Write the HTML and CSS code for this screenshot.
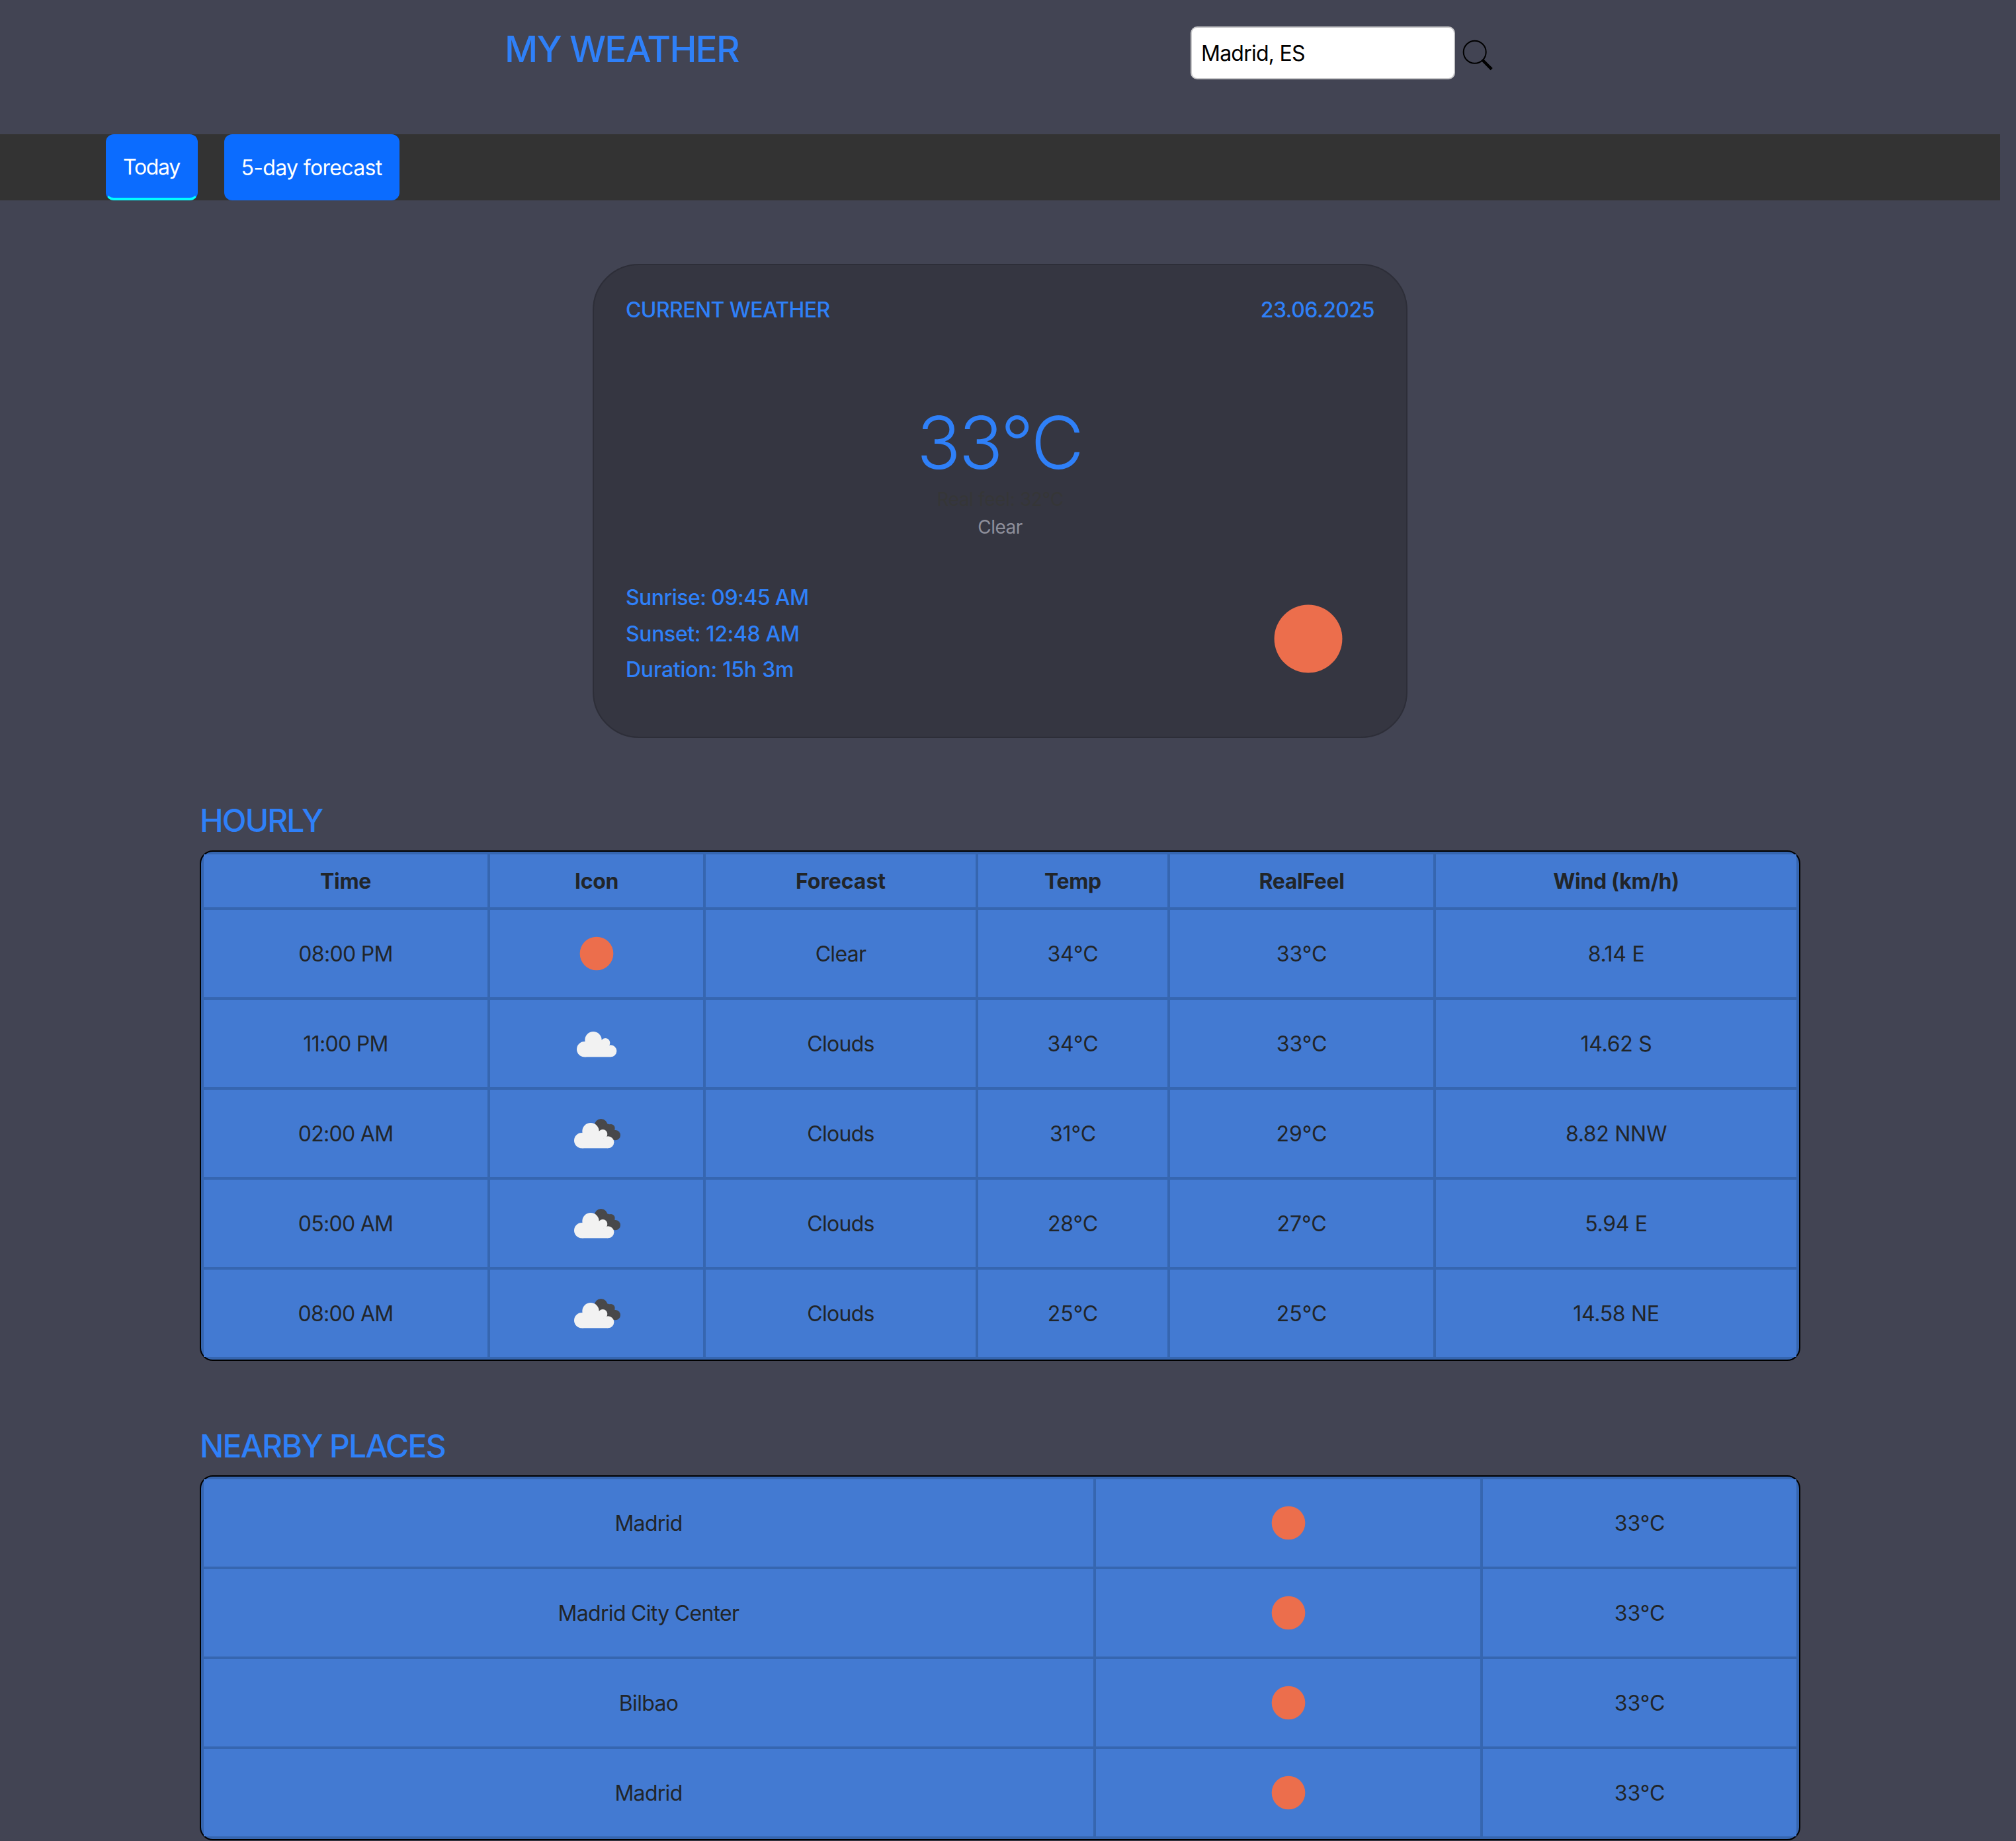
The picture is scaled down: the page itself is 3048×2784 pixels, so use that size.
FILE: index.html
```
<!DOCTYPE html>
<html lang="en">
<head>
<meta charset="utf-8">
<title>My Weather</title>
<link rel="stylesheet" href="styles.css">
</head>
<body>
<svg class="sprite" aria-hidden="true">
  <symbol id="sun" viewBox="-150 -150 300 300">
    <circle r="76" fill="#ec6e4c"/>
  </symbol>
  <symbol id="cloud-shape" viewBox="-150 -150 300 300">
    <circle cx="-55" cy="26" r="35"/>
    <circle cx="-15" cy="-16" r="38"/>
    <circle cx="40" cy="-3" r="21"/>
    <circle cx="64" cy="34" r="27"/>
    <rect x="-56" y="18" width="120" height="43"/>
    <rect x="-40" y="-16" width="84" height="60"/>
  </symbol>
  <symbol id="cloud" viewBox="-150 -150 300 300">
    <use href="#cloud-shape" x="-150" y="-150" width="300" height="300" fill="#f2f2f2"/>
  </symbol>
  <symbol id="clouds" viewBox="-150 -150 300 300">
    <g fill="#48484a">
      <circle cx="20" cy="-36" r="30"/>
      <circle cx="65" cy="-24" r="18"/>
      <circle cx="85" cy="8" r="23"/>
      <path d="M0-30 30-50 66-38 84-14 90 0 80 30 20 30Z"/>
    </g>
    <use href="#cloud-shape" x="-162" y="-144" width="300" height="300" fill="#f2f2f2"/>
  </symbol>
</svg>

<div class="page">
  <header class="header">
    <h1 class="logo">MY WEATHER</h1>
    <form class="search">
      <input class="search-input" type="text" value="Madrid, ES" aria-label="City">
      <svg class="search-icon" viewBox="0 0 52 52">
        <circle cx="21.7" cy="22.7" r="17" fill="none" stroke="#000" stroke-width="2"/>
        <path d="M33.6 35 47.2 48.6" stroke="#000" stroke-width="4.4"/>
      </svg>
    </form>
  </header>

  <nav class="tabs">
    <button class="tab tab-active">Today</button>
    <button class="tab tab-wide">5-day forecast</button>
  </nav>

  <section class="current">
    <div class="current-head">
      <span class="current-title">CURRENT WEATHER</span>
      <span class="current-date">23.06.2025</span>
    </div>
    <p class="temperature">33°C</p>
    <p class="real-feel">Real feel: 32°C</p>
    <p class="condition">Clear</p>
    <div class="current-foot">
      <div class="daylight">
        <p class="sunrise">Sunrise: 09:45 AM</p>
        <p class="sunset">Sunset: 12:48 AM</p>
        <p>Duration: 15h 3m</p>
      </div>
      <svg class="current-icon"><use href="#sun"/></svg>
    </div>
  </section>

  <section class="block hourly">
    <h2 class="block-title">HOURLY</h2>
    <table class="grid">
      <colgroup><col class="c-time"><col class="c-icon"><col class="c-forecast"><col class="c-temp"><col class="c-feel"><col></colgroup>
      <thead>
        <tr><th>Time</th><th>Icon</th><th class="plain">Forecast</th><th>Temp</th><th>RealFeel</th><th>Wind (km/h)</th></tr>
      </thead>
      <tbody>
        <tr><td>08:00 PM</td><td><svg class="icon"><use href="#sun"/></svg></td><td>Clear</td><td class="num">34°C</td><td class="num">33°C</td><td class="wind">8.14 E</td></tr>
        <tr><td>11:00 PM</td><td><svg class="icon"><use href="#cloud"/></svg></td><td>Clouds</td><td class="num">34°C</td><td class="num">33°C</td><td class="wind">14.62 S</td></tr>
        <tr><td>02:00 AM</td><td><svg class="icon"><use href="#clouds"/></svg></td><td>Clouds</td><td class="num">31°C</td><td class="num">29°C</td><td class="wind">8.82 NNW</td></tr>
        <tr><td>05:00 AM</td><td><svg class="icon"><use href="#clouds"/></svg></td><td>Clouds</td><td class="num">28°C</td><td class="num">27°C</td><td class="wind">5.94 E</td></tr>
        <tr><td>08:00 AM</td><td><svg class="icon"><use href="#clouds"/></svg></td><td>Clouds</td><td class="num">25°C</td><td class="num">25°C</td><td class="wind">14.58 NE</td></tr>
      </tbody>
    </table>
  </section>

  <section class="block nearby">
    <h2 class="block-title nearby-title">NEARBY PLACES</h2>
    <table class="grid">
      <colgroup><col class="c-place"><col class="c-place-icon"><col></colgroup>
      <tbody>
        <tr><td>Madrid</td><td><svg class="icon"><use href="#sun"/></svg></td><td class="num">33°C</td></tr>
        <tr><td>Madrid City Center</td><td><svg class="icon"><use href="#sun"/></svg></td><td class="num">33°C</td></tr>
        <tr><td>Bilbao</td><td><svg class="icon"><use href="#sun"/></svg></td><td class="num">33°C</td></tr>
        <tr><td>Madrid</td><td><svg class="icon"><use href="#sun"/></svg></td><td class="num">33°C</td></tr>
      </tbody>
    </table>
  </section>
</div>
</body>
</html>
```
FILE: styles.css
```
* { box-sizing: border-box; }

body {
  margin: 0;
  background: #424453;
  color: #212529;
  font: 400 32px/1.5 Inter, "Liberation Sans", sans-serif;
}

h1, h2, p { margin: 0; font-weight: 500; }

.sprite { display: none; }

.page { width: 3024px; }

/* Header */
.header {
  display: flex;
  align-items: flex-start;
  height: 203px;
  padding: 40px 0 0 763px;
}

.logo {
  width: 1037px;
  color: #2f80f8;
  font-size: 55px;
  line-height: 68px;
  letter-spacing: -1.75px;
}

.search { display: flex; gap: 8px; }

.search-input {
  width: 400px;
  height: 80px;
  padding: 1px 14px 0;
  border: 2px solid #c8c8ca;
  border-radius: 10px;
  background: #fff;
  color: #000;
  font: inherit;
  letter-spacing: -0.76px;
}

.search-icon { width: 52px; height: 52px; margin-top: 16px; }

/* Tabs */
.tabs {
  display: flex;
  gap: 40px;
  height: 100px;
  padding-left: 160px;
  background: #333;
}

.tab {
  width: 139px;
  padding: 2px 0 0;
  border: 0;
  border-radius: 12px;
  background: #0b6cff;
  color: #fff;
  font: inherit;
  letter-spacing: -1.3px;
}

.tab-wide { width: 265px; padding-right: 1px; letter-spacing: -0.66px; }

.tab-active {
  padding-right: 1px;
  border: 2px solid #0b6cff;
  border-bottom: 4px solid #0ff;
}

/* Current weather card */
.current {
  width: 1232px;
  height: 717px;
  margin: 96px auto 0;
  padding: 48px;
  border: 2px solid #2d2e38;
  border-radius: 70px;
  background: #353641;
  color: #2f80f8;
  text-align: center;
}

.current-head {
  display: flex;
  justify-content: space-between;
  font-weight: 500;
  line-height: 39px;
}

.current-title { letter-spacing: -0.6px; }
.current-date { letter-spacing: -0.5px; }

.temperature {
  margin-top: 114px;
  padding-right: 2px;
  font-size: 110px;
  font-weight: 340;
  line-height: 134px;
  letter-spacing: -2.8px;
}

.real-feel {
  margin-top: 2px;
  color: #353637;
  font-size: 28px;
  font-weight: 400;
  line-height: 34px;
  letter-spacing: -0.34px;
}

.condition {
  margin-top: 8px;
  color: #8e8f9b;
  font-size: 28px;
  font-weight: 400;
  line-height: 34px;
  letter-spacing: -0.5px;
}

.current-foot {
  display: flex;
  justify-content: space-between;
  margin-top: 52px;
}

.daylight {
  padding-top: 11px;
  text-align: left;
  line-height: 54.5px;
  letter-spacing: -0.23px;
}

.sunrise { letter-spacing: -0.55px; }
.sunset { letter-spacing: -0.38px; }

.current-icon { width: 200px; height: 200px; }

.current-icon use { transform: scale(1.015); transform-origin: center; }

/* Tables */
.block { width: 2420px; margin: 96px auto 0; }

.nearby { margin-top: 100px; }

.block-title {
  margin-bottom: 16px;
  color: #2f80f8;
  font-size: 48px;
  line-height: 58px;
  letter-spacing: -1.95px;
}

.nearby-title { margin-bottom: 15px; letter-spacing: -1.73px; }

.grid {
  width: 2420px;
  table-layout: fixed;
  border: 2px solid #000;
  border-radius: 20px;
  border-collapse: separate;
  border-spacing: 4px;
  background: #3666b0;
  text-align: center;
}

.grid th, .grid td {
  height: 132px;
  padding: 2px 0 0;
  background: #437ad2;
  vertical-align: middle;
  letter-spacing: -0.7px;
}

.grid th { height: 80px; font-weight: 700; letter-spacing: -0.35px; }

.grid .plain { letter-spacing: 0; }
.grid .num { letter-spacing: -0.05px; }
.grid .wind { letter-spacing: -0.3px; }

.c-time { width: 429px; }
.c-icon { width: 322px; }
.c-forecast { width: 408px; }
.c-temp { width: 286px; }
.c-feel { width: 398px; }
.c-place { width: 1345px; }
.c-place-icon { width: 581px; }

.icon { display: block; width: 100px; height: 100px; margin: -2px auto 0; }
```
